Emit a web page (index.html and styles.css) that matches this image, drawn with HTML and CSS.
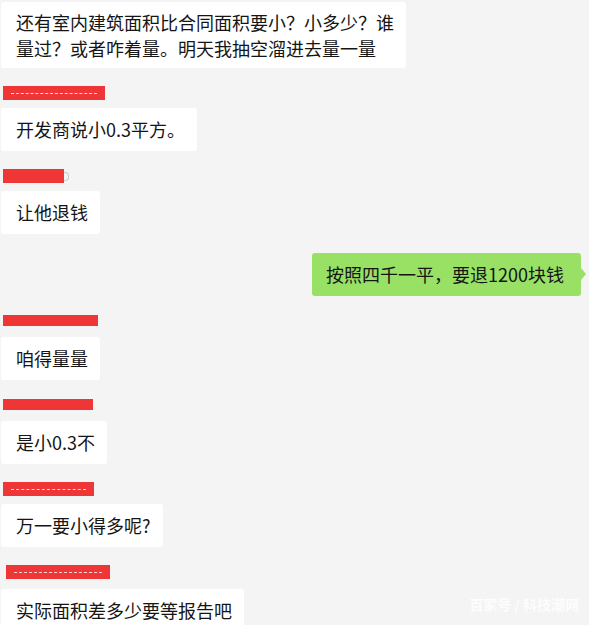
FILE: index.html
```html
<!DOCTYPE html>
<html lang="zh-CN">

<head>
    <meta charset="UTF-8">
    <meta name="viewport" content="width=device-width, initial-scale=1.0">
    <title>聊天记录</title>
    <link rel="stylesheet" href="styles.css">
</head>

<body>
    <div class="chat">
        <div class="msg first">还有室内建筑面积比合同面积要小？小多少？谁<br>量过？或者咋着量。明天我抽空溜进去量一量</div>

        <div class="name w102 dashed"></div>
        <div class="msg">开发商说小0.3平方。</div>

        <div class="name w61 tall"><span class="dot"></span></div>
        <div class="msg">让他退钱</div>

        <div class="msg mine">按照四千一平，要退1200块钱</div>

        <div class="name w95 thin"></div>
        <div class="msg">咱得量量</div>

        <div class="name w90 thin"></div>
        <div class="msg">是小0.3不</div>

        <div class="name w91 dashed"></div>
        <div class="msg">万一要小得多呢?</div>

        <div class="name w104 dashed shift"></div>
        <div class="msg">实际面积差多少要等报告吧</div>
    </div>

    <div class="watermark">百家号 / 科技潮网</div>
</body>

</html>
```

FILE: styles.css
```css
body {
    margin: 0;
    padding: 0;
    background-color: #f4f4f4;
    font-family: "Microsoft YaHei", "Noto Sans CJK SC", sans-serif;
    color: #151515;
    height: 625px;
    overflow: hidden;
    position: relative;
}

.chat {
    display: flex;
    flex-direction: column;
    align-items: flex-start;
    padding: 2px 0 0 1px;
}

.msg {
    background-color: #fff;
    border-radius: 3px;
    font-size: 18px;
    line-height: 26px;
    padding: 8px 12px 9px 15px;
    margin-bottom: 18px;
    position: relative;
}

.msg.first {
    padding: 7px 12px 7px 15px;
}

.msg.mine {
    align-self: flex-end;
    margin-right: 8px;
    margin-top: 1px;
    background-color: #98e165;
    padding: 8px 17px 9px 14px;
}

.msg.mine::after {
    content: "";
    position: absolute;
    right: -5px;
    top: 15px;
    border-top: 6px solid transparent;
    border-bottom: 6px solid transparent;
    border-left: 5px solid #98e165;
}

.name {
    height: 14px;
    background-color: #ef3636;
    margin: 0 0 8px 2px;
    position: relative;
}

.name.thin {
    height: 11px;
    margin-top: 1px;
    margin-bottom: 11px;
}

.name.shift {
    margin-left: 5px;
    margin-bottom: 10px;
}

.name.dashed::after {
    content: "";
    position: absolute;
    left: 8px;
    right: 8px;
    top: 7px;
    border-top: 1px dashed rgba(255, 255, 255, 0.8);
}

.dot {
    position: absolute;
    right: -5px;
    top: 3px;
    width: 4px;
    height: 7px;
    border: 1px solid #c9c9c9;
    border-left: none;
    border-radius: 0 4px 4px 0;
}

.w61 { width: 61px; }
.w90 { width: 90px; }
.w91 { width: 91px; }
.w95 { width: 95px; }
.w102 { width: 102px; }
.w104 { width: 104px; }

.watermark {
    position: absolute;
    right: 10px;
    bottom: 11px;
    font-size: 14px;
    font-weight: bold;
    color: #fff;
    opacity: 0.85;
}
```
